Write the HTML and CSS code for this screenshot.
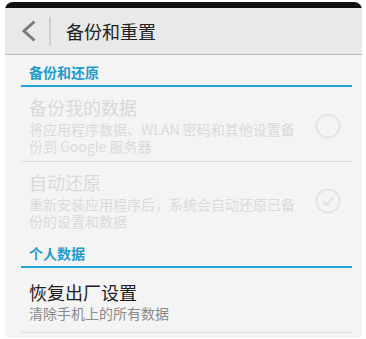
FILE: index.html
```html
<!DOCTYPE html>
<html lang="zh-CN">
<head>
    <meta charset="UTF-8">
    <meta name="viewport" content="width=device-width, initial-scale=1.0">
    <title>备份和重置</title>
    <link rel="stylesheet" href="styles.css">
</head>
<body>
    <div class="screen">
        <div class="statusbar"></div>

        <div class="appbar">
            <svg class="back" width="16" height="22" viewBox="0 0 16 22">
                <polyline points="13.5,1.5 3,11 13.5,20.5" fill="none" stroke="#7a7a7a" stroke-width="3"/>
            </svg>
            <div class="appbar-sep"></div>
            <h1>备份和重置</h1>
        </div>

        <div class="content">
            <div class="section-title">备份和还原</div>

            <div class="item disabled divided">
                <div class="item-text">
                    <div class="item-title">备份我的数据</div>
                    <div class="item-sub">将应用程序数据、WLAN 密码和其他设置备份到 Google 服务器</div>
                </div>
                <svg class="item-icon" width="28" height="28" viewBox="0 0 28 28">
                    <circle cx="14" cy="14" r="11.5" fill="none" stroke="#e4e4e4" stroke-width="2"/>
                </svg>
            </div>

            <div class="item disabled">
                <div class="item-text">
                    <div class="item-title">自动还原</div>
                    <div class="item-sub">重新安装应用程序后，系统会自动还原已备份的设置和数据</div>
                </div>
                <svg class="item-icon" width="28" height="28" viewBox="0 0 28 28">
                    <circle cx="14" cy="14" r="11.5" fill="none" stroke="#e4e4e4" stroke-width="2"/>
                    <polyline points="8.5,14 12.5,18 19.5,10.5" fill="none" stroke="#e2e2e2" stroke-width="2"/>
                </svg>
            </div>

            <div class="section-title">个人数据</div>

            <div class="item divided single">
                <div class="item-text">
                    <div class="item-title">恢复出厂设置</div>
                    <div class="item-sub">清除手机上的所有数据</div>
                </div>
            </div>
        </div>
    </div>
</body>
</html>
```

FILE: styles.css
```css
* {
    box-sizing: border-box;
    margin: 0;
    padding: 0;
}

body {
    background-color: #ffffff;
    font-family: "Noto Sans CJK SC", "Noto Sans", sans-serif;
}

.screen {
    margin: 2px 0 0 5px;
    width: 357px;
    height: 336px;
    background-color: #f4f4f4;
    border-radius: 8px 8px 4px 4px;
    overflow: hidden;
}

.statusbar {
    height: 6px;
    background-color: #111;
}

.appbar {
    height: 47px;
    background-color: #e9e9e9;
    border-bottom: 1px solid #bcbcbc;
    display: flex;
    align-items: center;
    padding-left: 16px;
}

.back {
    display: block;
}

.appbar-sep {
    width: 2px;
    height: 29px;
    background-color: #cfcfcf;
    margin: 0 0 0 12px;
}

.appbar h1 {
    font-size: 18px;
    font-weight: normal;
    color: #222;
    margin-left: 15px;
    line-height: 22px;
}

.content {
    padding: 0 10px 0 16px;
}

.section-title {
    font-size: 14px;
    font-weight: bold;
    line-height: 16px;
    color: #1f9ccb;
    padding: 9px 0 5px 8px;
    border-bottom: 2px solid #24a6d6;
}

.item {
    display: flex;
    align-items: center;
    padding: 9px 10px 6px 8px;
}

.item.divided {
    border-bottom: 1px solid #dcdcdc;
}

.item.single {
    padding-top: 13px;
    padding-bottom: 10px;
}

.item-text {
    width: 275px;
    flex: none;
}

.item-title {
    font-size: 18px;
    line-height: 22px;
    color: #1d1d1d;
}

.item-sub {
    font-size: 14px;
    line-height: 17px;
    color: #8a8a8a;
    margin-top: 3px;
}

.item.single .item-sub {
    margin-top: 2px;
}

.item.disabled .item-title {
    color: #d9d9d9;
}

.item.disabled .item-sub {
    color: #dadada;
}

.item-icon {
    margin-left: auto;
    display: block;
}
```
